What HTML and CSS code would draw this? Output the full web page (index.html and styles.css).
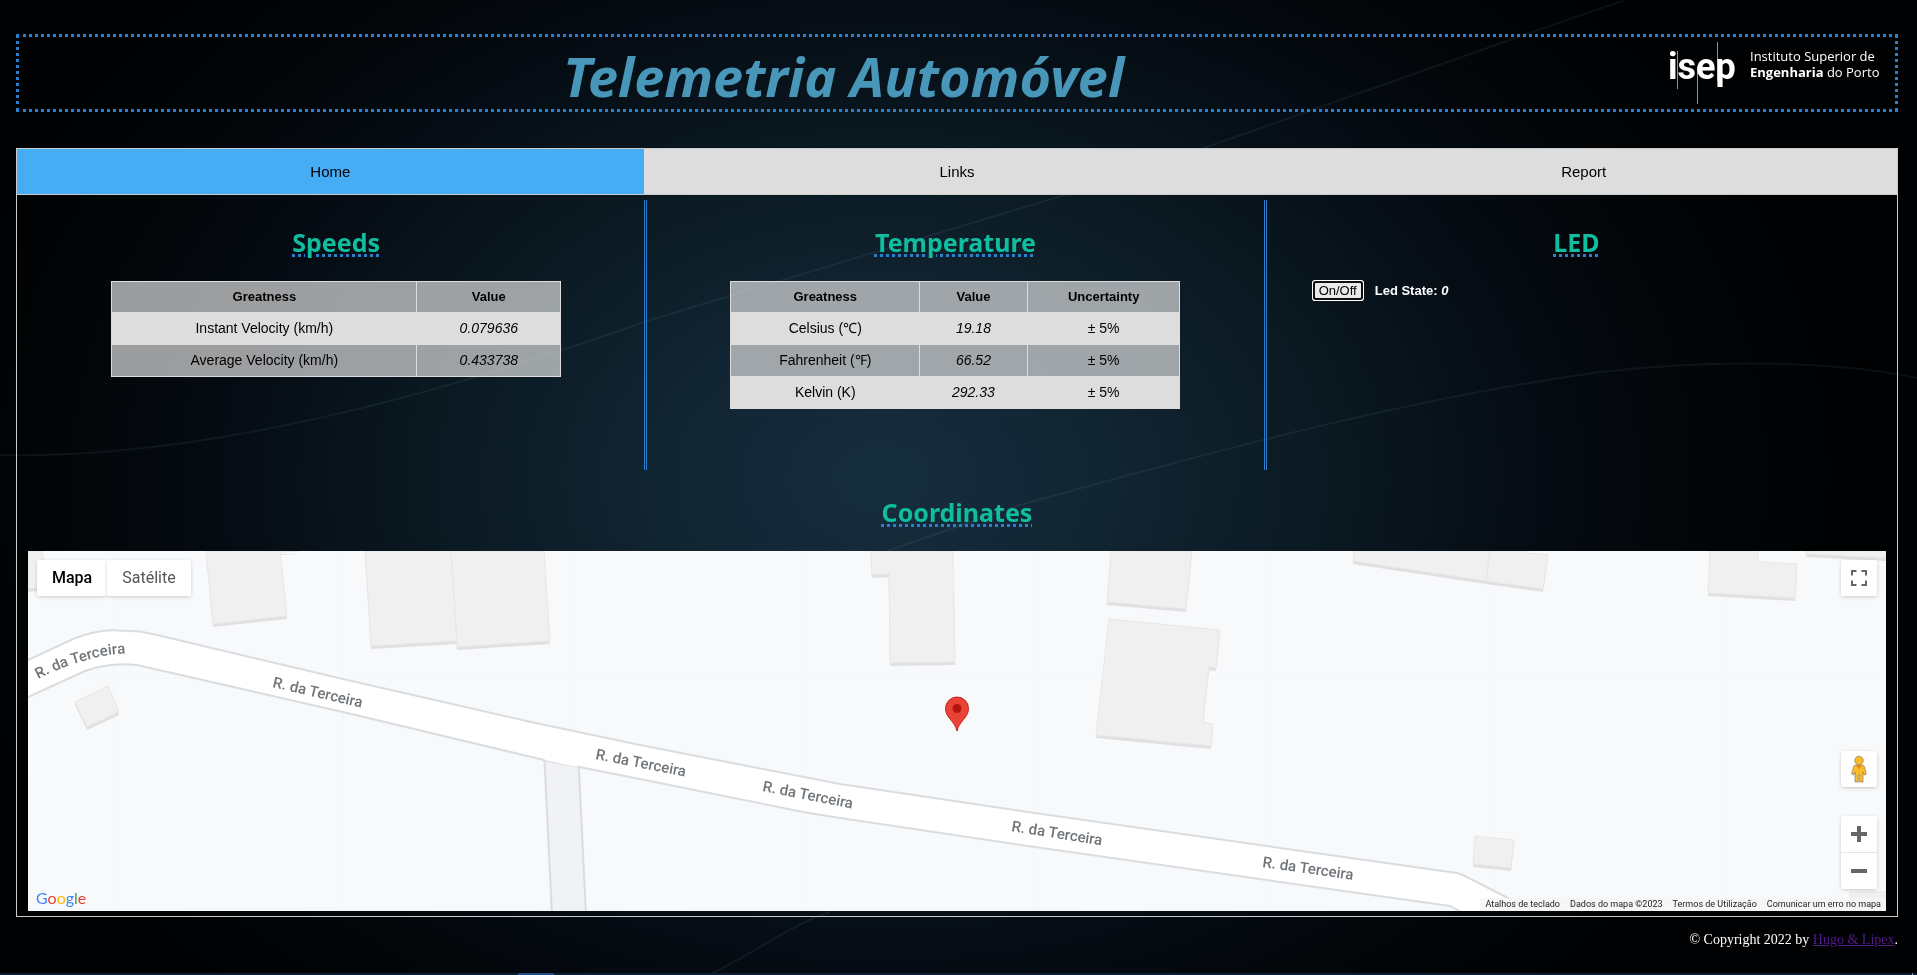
FILE: index.html
```html
<!DOCTYPE html>
<html lang="en">
<head>
<meta charset="utf-8">
<title>Telemetria Automóvel</title>
<link rel="stylesheet" href="styles.css">
</head>
<body>
<svg class="backdrop" viewBox="0 0 1917 975" preserveAspectRatio="none" aria-hidden="true">
  <path d="M0 455C200 460 440 395 650 320L1065 195C1240 138 1420 70 1625 0"/>
  <path d="M709 975C760 950 790 925 830 912"/>
  <path d="M887 551L1020 505C1200 455 1400 400 1600 372C1720 358 1840 362 1917 378"/>
</svg>

<header class="banner">
  <h1 class="banner-title">Telemetria Automóvel</h1>
  <div class="logo">
    <svg class="logo-mark" width="70" height="64" viewBox="0 0 70 64" role="img" aria-label="isep">
      <path class="logo-line" d="M9.500 10V48M29.500 26V63M49.500 1V40"/>
      <text class="logo-word" x="0" y="38">isep</text>
    </svg>
    <p class="logo-text">Instituto Superior de<br><b>Engenharia</b> do Porto</p>
  </div>
</header>

<nav class="tabs">
  <button class="tab tab-active" type="button">Home</button>
  <button class="tab" type="button">Links</button>
  <button class="tab" type="button">Report</button>
</nav>

<main class="panel">
  <div class="columns">
    <section class="column">
      <h2 class="heading">Speeds</h2>
      <table class="data speeds">
        <thead><tr><th>Greatness</th><th>Value</th></tr></thead>
        <tbody>
          <tr><td>Instant Velocity (km/h)</td><td><i>0.079636</i></td></tr>
          <tr><td>Average Velocity (km/h)</td><td><i>0.433738</i></td></tr>
        </tbody>
      </table>
    </section>
    <section class="column">
      <h2 class="heading">Temperature</h2>
      <table class="data temperature">
        <thead><tr><th>Greatness</th><th>Value</th><th>Uncertainty</th></tr></thead>
        <tbody>
          <tr><td>Celsius (℃)</td><td><i>19.18</i></td><td>± 5%</td></tr>
          <tr><td>Fahrenheit (℉)</td><td><i>66.52</i></td><td>± 5%</td></tr>
          <tr><td>Kelvin (K)</td><td><i>292.33</i></td><td>± 5%</td></tr>
        </tbody>
      </table>
    </section>
    <section class="column">
      <h2 class="heading">LED</h2>
      <div class="led">
        <button class="led-button" type="button">On/Off</button>
        <span class="led-state">Led State: <i>0</i></span>
      </div>
    </section>
  </div>

  <h2 class="heading">Coordinates</h2>
  <div class="map">
    <svg class="map-canvas" viewBox="28 551 1858 360" preserveAspectRatio="xMidYMid slice" aria-label="Map">
      <defs>
        <g id="buildings">
          <path d="M28 551H42L48 587 28 589ZM206 551H280L287 616 213 624ZM280 551H298L281 552ZM365 551H451L457 641 371 646ZM451 551H544L550 641 457 647Z"/>
          <path d="M75 702 108 686 119 712 87 727ZM871 551H953L955 662 890 663 889 574 872 575ZM1111 551H1192L1186 609 1107 602Z"/>
          <path d="M1109 619 1220 630 1216 668 1209 667 1203 722 1213 724 1211 746 1096 735Z"/>
          <path d="M1354 551H1490L1486 581 1353 561ZM1490 551H1528V553L1548 555 1543 589 1486 581ZM1710 551H1758V562L1797 564 1795 598 1708 593Z"/>
          <path d="M1806 551H1886V558L1806 554ZM1475 836 1514 840 1511 868 1473 864ZM1850 892H1886V911H1850Z"/>
        </g>
        <path id="bend" d="M38 679C60 668 72 664 84 661C96 657 112 653 140 653"/>
      </defs>
      <path class="grid-line" d="M113.500 551V911M343.500 551V911M574.500 551V911M804.500 551V911M1034.500 551V911M1265.500 551V911M1495.500 551V911M1726.500 551V911M28 678.500H1886M28 908.500H1886"/>
      <use href="#buildings" class="wall" y="3"/>
      <use href="#buildings" class="roof"/>
      <path class="lane" d="M544 750 552 915H586L578 750Z"/>
      <path class="road" d="M20 664 28 660 73 639Q98 629 118 630.500L140 631.500 157 635 343 679 531 722 640 745 840 784 1035 813 1280 848 1457 873 1463 875 1508 898 1560 926 1480 922 1450 906 1280 882 1035 847 840 818 803 812 640 779 544 760 343 712 137 665Q110 662 85 671L28 697 20 701Z"/>
      <path class="junction" d="M545 756V760L577 767V756Z"/>
      <g class="street">
        <text><textPath href="#bend">R. da Terceira</textPath></text>
        <text transform="translate(272 687) rotate(13)">R. da Terceira</text>
        <text transform="translate(595 759) rotate(11)">R. da Terceira</text>
        <text transform="translate(762 791) rotate(11)">R. da Terceira</text>
        <text transform="translate(1011 831) rotate(9)">R. da Terceira</text>
        <text transform="translate(1262 867) rotate(8)">R. da Terceira</text>
      </g>
      <path fill="#ea4335" stroke="#c5221f" d="M957 731C955 721 945.500 718 945.500 708.500A11.500 11.500 0 0 1 968.500 708.500C968.500 718 959 721 957 731Z"/>
      <circle cx="957" cy="708.500" r="4.500" fill="#b31412"/>
    </svg>

    <div class="map-types">
      <button class="map-type map-type-active" type="button">Mapa</button>
      <button class="map-type" type="button">Satélite</button>
    </div>
    <div class="map-tools">
      <button class="map-tool" type="button" aria-label="Fullscreen">
        <svg width="16" height="16" viewBox="0 0 16 16"><path fill="none" stroke="#666" stroke-width="2" d="M1 5.500V1H5.500M10.500 1H15V5.500M15 10.500V15H10.500M5.500 15H1V10.500"/></svg>
      </button>
      <div class="map-lower">
        <button class="map-tool" type="button" aria-label="Street View">
          <svg width="16" height="28" viewBox="0 0 16 28"><path fill="#fbbc2b" stroke="#8f7d57" stroke-width=".7" d="M4.500 10H11.500Q13 10 13.500 12L15.300 19 13.300 20 12 17V27H8.700V20H7.300V27H4V17L2.700 20 .7 19 2.500 12Q3 10 4.500 10Z"/><path fill="#e58a2a" d="M5 10H11L8 14.500Z"/><circle cx="8" cy="5.500" r="4.300" fill="#fbbc2b" stroke="#8f7d57" stroke-width=".7"/></svg>
        </button>
        <div class="zoom">
          <button class="zoom-button" type="button" aria-label="Zoom in"><svg width="16" height="16" viewBox="0 0 16 16"><path fill="#666" d="M6 0H10V6H16V10H10V16H6V10H0V6H6Z"/></svg></button>
          <button class="zoom-button" type="button" aria-label="Zoom out"><svg width="16" height="16" viewBox="0 0 16 16"><path fill="#666" d="M0 6H16V10H0Z"/></svg></button>
        </div>
      </div>
    </div>
    <div class="google"><span class="g-blue">G</span><span class="g-red">o</span><span class="g-yellow">o</span><span class="g-blue">g</span><span class="g-green">l</span><span class="g-red">e</span></div>
    <div class="map-legal">
      <button class="legal" type="button">Atalhos de teclado</button>
      <span class="legal">Dados do mapa ©2023</span>
      <a class="legal" href="#">Termos de Utilização</a>
      <a class="legal" href="#">Comunicar um erro no mapa</a>
    </div>
  </div>
</main>

<footer class="footer">© Copyright 2022 by <a class="footer-link" href="#">Hugo &amp; Lipex</a>.</footer>
<div class="edge"><span class="edge-active"></span><span class="edge-tick"></span></div>
</body>
</html>
```
FILE: styles.css
```css
* {
  box-sizing: border-box;
}

body {
  margin: 0;
  min-height: 100vh;
  padding: 34px 19px 0 16px;
  background: radial-gradient(ellipse 50% 72% at 46% 49%, #162e3d 0%, #122634 20%, #0b1a23 45%, #050b12 70%, #020507 88%, #000102 100%) #000102;
  color: #fff;
  font-family: "Liberation Sans", Arial, sans-serif;
}

button {
  border: 0;
  padding: 0;
  cursor: pointer;
}

.backdrop {
  position: fixed;
  inset: 0;
  z-index: -1;
  width: 100%;
  height: 100%;
  fill: none;
  stroke: rgba(150, 190, 205, 0.08);
  stroke-width: 2;
}

/* Banner */
.banner {
  display: flex;
  height: 78px;
  border: 3px dotted #2b7fcb;
}

.banner-title {
  flex: 1;
  margin: 0;
  padding-top: 3px;
  color: #4897b9;
  font: italic bold 54px/72px "Noto Sans", "Open Sans", sans-serif;
  text-align: center;
}

.logo {
  display: flex;
  gap: 12px;
  width: 227px;
  height: 64px;
  margin-top: 4px;
}

.logo-word {
  fill: #fff;
  font: bold 36px Roboto, sans-serif;
}

.logo-line {
  stroke: #9a8d8a;
}

.logo-text {
  flex: none;
  margin: 7px 0 0;
  font: 13px/16px "Open Sans", sans-serif;
  white-space: nowrap;
}

/* Tabs */
.tabs {
  display: grid;
  grid-template-columns: repeat(3, 1fr);
  margin-top: 36px;
  border: 1px solid #ccc;
  background: #ddd;
}

.tab {
  padding: 14px 16px;
  background: #ddd;
  color: #000;
  font: 15px/17px "Liberation Sans", Arial, sans-serif;
}

.tab-active {
  background: #46acf3;
}

.panel {
  padding: 5px 11px;
  border: 1px solid #ccc;
  border-top: 0;
}

.columns {
  display: grid;
  grid-template-columns: repeat(3, 1fr);
}

.column {
  min-height: 270px;
  border-right: 3px double #2b7fcb;
}

.column:last-child {
  border-right: 0;
}

.heading {
  margin: 0;
  padding: 24px 0 21px;
  color: #10bd9f;
  font: bold 25px/36px "Noto Sans", "Open Sans", sans-serif;
  text-align: center;
  text-decoration: underline dotted 3px #2b7fcb;
}

/* Tables */
.data {
  width: 450px;
  max-width: 100%;
  margin: 0 auto;
  border: 1px solid #ddd;
  border-collapse: collapse;
  color: #000;
  font-size: 14px;
  line-height: 15px;
  text-align: center;
  table-layout: fixed;
}

.data th,
.data td {
  padding: 8px;
  border: 1px solid #ddd;
}

.data th {
  font-size: 13px;
  line-height: 14px;
}

.data tr {
  background: rgba(221, 221, 221, 0.7);
}

.data tbody tr:nth-child(odd) {
  background: #ddd;
}

.speeds th:first-child {
  width: 68%;
}

.temperature th:first-child {
  width: 42%;
}

.temperature th:nth-child(2) {
  width: 24%;
}

/* LED */
.led {
  display: flex;
  align-items: center;
  gap: 14px;
  padding: 2px 48px;
}

.led-button {
  padding: 0 4px;
  border-radius: 1px;
  background: #e9e9e9;
  box-shadow: 0 0 0 2px #101010, 0 0 0 3px #fff;
  color: #000;
  font: 13px/15px "Liberation Sans", Arial, sans-serif;
}

.led-state {
  font-size: 13px;
  font-weight: bold;
}

/* Map */
.map {
  position: relative;
  height: 360px;
  overflow: hidden;
  background: #f8f9fb;
  font-family: Roboto, sans-serif;
}

.map-canvas {
  display: block;
  width: 100%;
  height: 100%;
}

.grid-line {
  stroke: #f5f6f8;
}

.wall {
  fill: #dfe0e2;
}

.roof {
  fill: #f0f0f0;
  stroke: #e6e7e8;
}

.lane {
  fill: #f1f2f3;
  stroke: #dadce0;
  stroke-width: 2;
}

.road {
  fill: #fff;
  stroke: #dadde0;
  stroke-width: 2;
}

.junction {
  fill: #fff;
}

.street {
  fill: #70757a;
  font-size: 15px;
  font-weight: 500;
}

.map-types {
  position: absolute;
  top: 9px;
  left: 9px;
  display: flex;
}

.map-type,
.map-tool,
.zoom {
  border-radius: 2px;
  background: #fff;
  box-shadow: 0 1px 4px -1px rgba(0, 0, 0, 0.3);
}

.map-type {
  padding: 0 15px;
  color: #565656;
  font: 16px/36px Roboto, sans-serif;
}

.map-type-active {
  color: #000;
  font-weight: 500;
}

.map-tools {
  position: absolute;
  top: 9px;
  right: 9px;
  bottom: 22px;
  display: flex;
  flex-direction: column;
  justify-content: space-between;
}

.map-lower {
  display: grid;
  gap: 29px;
}

.map-tool,
.zoom-button {
  display: grid;
  place-items: center;
  width: 36px;
  height: 36px;
}

.zoom-button {
  background: none;
}

.zoom-button:first-child {
  height: 37px;
  border-bottom: 1px solid #e6e6e6;
}

.google {
  position: absolute;
  bottom: 3px;
  left: 8px;
  font: 16px/20px Lato, sans-serif;
}

.g-blue {
  color: #4285f4;
}

.g-red {
  color: #ea4335;
}

.g-yellow {
  color: #fbbc04;
}

.g-green {
  color: #34a853;
}

.map-legal {
  position: absolute;
  right: 0;
  bottom: 0;
  display: flex;
}

.legal {
  padding: 0 5px;
  background: rgba(245, 245, 245, 0.8);
  color: #222;
  font: 9px/13px Roboto, sans-serif;
  text-decoration: none;
}

.footer {
  padding: 14px 0 20px;
  font: 14px/18px "Liberation Serif", "Times New Roman", serif;
  text-align: right;
}

.footer-link {
  color: #551a8b;
}

/* Strip along the bottom of the window */
.edge {
  position: fixed;
  right: 0;
  bottom: 0;
  left: 0;
  display: flex;
  justify-content: space-between;
  height: 2px;
  padding: 0 4px 0 27%;
  background: #0b1d36;
}

.edge-active {
  width: 36px;
  background: #1b4f8c;
}

.edge-tick {
  width: 1px;
  background: #8a94a3;
}
```
